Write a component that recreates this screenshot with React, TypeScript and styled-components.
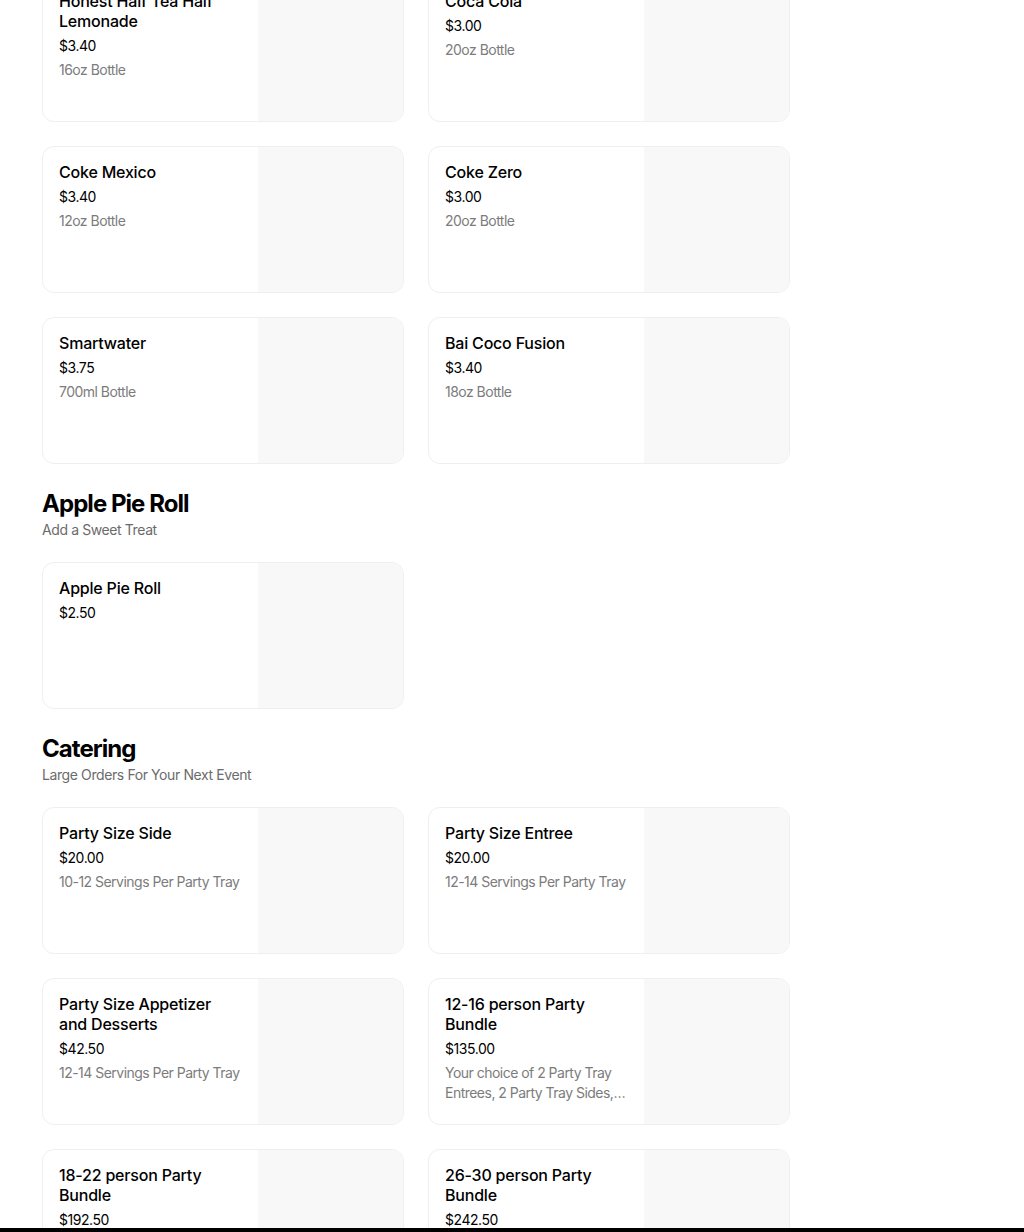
import React from "react";
import styled, { createGlobalStyle } from "styled-components";

const GlobalStyle = createGlobalStyle`
  html, body {
    margin: 0;
    padding: 0;
    background: #fff;
    overflow: hidden;
  }
  body {
    font-family: Inter, "Liberation Sans", sans-serif;
    color: #000;
    -webkit-font-smoothing: antialiased;
  }
`;

const Page = styled.div`
  padding: 0 42px;
  margin-top: -25px;
  display: flex;
  flex-direction: column;
  gap: 24px;
`;

const Section = styled.section`
  display: flex;
  flex-direction: column;
  gap: 22px;
`;

const SectionHeader = styled.div`
  display: flex;
  flex-direction: column;
`;

const SectionTitle = styled.h2`
  margin: 0;
  font-size: 24px;
  line-height: 32px;
  font-weight: 700;
  letter-spacing: -0.95px;
`;

const SectionSubtitle = styled.div`
  font-size: 14px;
  line-height: 20px;
  color: #6b6b6b;
  letter-spacing: -0.4px;
`;

const Grid = styled.div`
  display: grid;
  grid-template-columns: repeat(2, 362px);
  column-gap: 24px;
  row-gap: 24px;
`;

const Card = styled.div`
  display: flex;
  height: 147px;
  box-sizing: border-box;
  border: 1px solid #efefef;
  border-radius: 12px;
  overflow: hidden;
  background: #fff;
`;

const CardText = styled.div`
  flex: 1;
  min-width: 0;
  padding: 15px 16px 16px 16px;
  display: flex;
  flex-direction: column;
`;

const ItemName = styled.div`
  font-size: 16px;
  line-height: 20px;
  font-weight: 500;
  letter-spacing: -0.2px;
`;

const ItemPrice = styled.div`
  margin-top: 5px;
  font-size: 14px;
  line-height: 20px;
  letter-spacing: -0.45px;
`;

const ItemDesc = styled.div`
  margin-top: 4px;
  font-size: 14px;
  line-height: 20px;
  color: #7c7c7c;
  letter-spacing: -0.52px;
  display: -webkit-box;
  -webkit-line-clamp: 2;
  -webkit-box-orient: vertical;
  overflow: hidden;
`;

const ItemImage = styled.div`
  width: 145px;
  flex-shrink: 0;
  background: #f8f8f8;
`;

const BottomBar = styled.div`
  position: fixed;
  left: 0;
  right: 0;
  bottom: 0;
  height: 4px;
  background: #000;
`;

type Item = {
  name: string;
  price: string;
  desc?: string;
};

type MenuSection = {
  title?: string;
  subtitle?: string;
  items: Item[];
};

const sections: MenuSection[] = [
  {
    items: [
      { name: "Honest Half Tea Half Lemonade", price: "$3.40", desc: "16oz Bottle" },
      { name: "Coca Cola", price: "$3.00", desc: "20oz Bottle" },
      { name: "Coke Mexico", price: "$3.40", desc: "12oz Bottle" },
      { name: "Coke Zero", price: "$3.00", desc: "20oz Bottle" },
      { name: "Smartwater", price: "$3.75", desc: "700ml Bottle" },
      { name: "Bai Coco Fusion", price: "$3.40", desc: "18oz Bottle" },
    ],
  },
  {
    title: "Apple Pie Roll",
    subtitle: "Add a Sweet Treat",
    items: [{ name: "Apple Pie Roll", price: "$2.50" }],
  },
  {
    title: "Catering",
    subtitle: "Large Orders For Your Next Event",
    items: [
      { name: "Party Size Side", price: "$20.00", desc: "10-12 Servings Per Party Tray" },
      { name: "Party Size Entree", price: "$20.00", desc: "12-14 Servings Per Party Tray" },
      { name: "Party Size Appetizer and Desserts", price: "$42.50", desc: "12-14 Servings Per Party Tray" },
      {
        name: "12-16 person Party Bundle",
        price: "$135.00",
        desc: "Your choice of 2 Party Tray Entrees, 2 Party Tray Sides, and 1 Party Tray Appetizer",
      },
      {
        name: "18-22 person Party Bundle",
        price: "$192.50",
        desc: "Your choice of 3 Party Tray Entrees, 3 Party Tray Sides, and 1 Party Tray Appetizer",
      },
      {
        name: "26-30 person Party Bundle",
        price: "$242.50",
        desc: "Your choice of 4 Party Tray Entrees, 4 Party Tray Sides, and 2 Party Tray Appetizers",
      },
    ],
  },
];

const MenuCard: React.FC<{ item: Item }> = ({ item }) => (
  <Card>
    <CardText>
      <ItemName>{item.name}</ItemName>
      <ItemPrice>{item.price}</ItemPrice>
      {item.desc && <ItemDesc>{item.desc}</ItemDesc>}
    </CardText>
    <ItemImage />
  </Card>
);

const App: React.FC = () => (
  <>
    <GlobalStyle />
    <Page>
      {sections.map((section, i) => (
        <Section key={section.title ?? i}>
          {section.title && (
            <SectionHeader>
              <SectionTitle>{section.title}</SectionTitle>
              <SectionSubtitle>{section.subtitle}</SectionSubtitle>
            </SectionHeader>
          )}
          <Grid>
            {section.items.map((item) => (
              <MenuCard key={item.name} item={item} />
            ))}
          </Grid>
        </Section>
      ))}
    </Page>
    <BottomBar />
  </>
);

export default App;
